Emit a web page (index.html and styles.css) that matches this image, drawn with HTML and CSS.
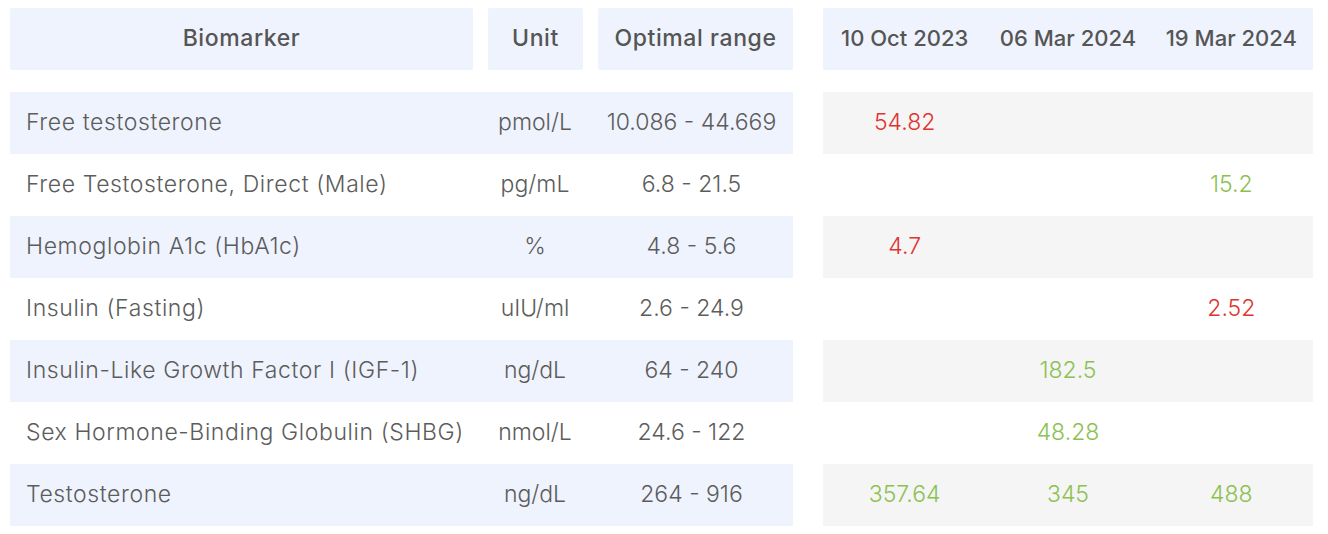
FILE: index.html
```html
<!DOCTYPE html>
<html>
<head>
<meta charset="utf-8">
<link rel="stylesheet" href="styles.css">
</head>
<body>
<div class="table">
  <div class="row head">
    <div class="left">
      <div class="hcell">Biomarker</div>
      <div class="hcell">Unit</div>
      <div class="hcell">Optimal range</div>
    </div>
    <div class="right hdates">
      <div class="dcell">10 Oct 2023</div>
      <div class="dcell">06 Mar 2024</div>
      <div class="dcell">19 Mar 2024</div>
    </div>
  </div>

  <div class="row body odd">
    <div class="left"><div class="name">Free testosterone</div><div class="c">pmol/L</div><div class="c">10.086 - 44.669</div></div>
    <div class="right"><div class="v red">54.82</div><div class="v"></div><div class="v"></div></div>
  </div>
  <div class="row body">
    <div class="left"><div class="name">Free Testosterone, Direct (Male)</div><div class="c">pg/mL</div><div class="c">6.8 - 21.5</div></div>
    <div class="right"><div class="v"></div><div class="v"></div><div class="v green">15.2</div></div>
  </div>
  <div class="row body odd">
    <div class="left"><div class="name">Hemoglobin A1c (HbA1c)</div><div class="c">%</div><div class="c">4.8 - 5.6</div></div>
    <div class="right"><div class="v red">4.7</div><div class="v"></div><div class="v"></div></div>
  </div>
  <div class="row body">
    <div class="left"><div class="name">Insulin (Fasting)</div><div class="c">uIU/ml</div><div class="c">2.6 - 24.9</div></div>
    <div class="right"><div class="v"></div><div class="v"></div><div class="v red">2.52</div></div>
  </div>
  <div class="row body odd">
    <div class="left"><div class="name">Insulin-Like Growth Factor I (IGF-1)</div><div class="c">ng/dL</div><div class="c">64 - 240</div></div>
    <div class="right"><div class="v"></div><div class="v green">182.5</div><div class="v"></div></div>
  </div>
  <div class="row body">
    <div class="left"><div class="name">Sex Hormone-Binding Globulin (SHBG)</div><div class="c">nmol/L</div><div class="c">24.6 - 122</div></div>
    <div class="right"><div class="v"></div><div class="v green">48.28</div><div class="v"></div></div>
  </div>
  <div class="row body odd">
    <div class="left"><div class="name">Testosterone</div><div class="c">ng/dL</div><div class="c">264 - 916</div></div>
    <div class="right"><div class="v green">357.64</div><div class="v green">345</div><div class="v green">488</div></div>
  </div>
</div>
</body>
</html>
```
FILE: styles.css
```css
html, body {
  margin: 0;
  padding: 0;
  background: #ffffff;
}
body {
  font-family: Inter, "Open Sans", sans-serif;
  color: #5a5a5a;
}
.table {
  padding: 8px 15px 0 10px;
  display: flex;
  flex-direction: column;
}
.row {
  display: flex;
  height: 62px;
}
.left {
  width: 783px;
  display: grid;
  grid-template-columns: 470px 110px 203px;
}
.right {
  margin-left: 30px;
  width: 490px;
  display: grid;
  grid-template-columns: 1fr 1fr 1fr;
}
.head {
  margin-bottom: 22px;
}
.head .left {
  grid-template-columns: 463px 95px 195px;
  column-gap: 15px;
}
.hcell, .hdates {
  background: #eff3fe;
  border-radius: 2px;
}
.hcell, .dcell {
  display: flex;
  align-items: center;
  justify-content: center;
  padding-bottom: 3px;
  font-size: 23px;
  font-weight: 500;
  letter-spacing: 0.6px;
  color: #555555;
}
.dcell {
  font-size: 22px;
  letter-spacing: 0;
}
.odd .left { background: #eff3fe; }
.odd .right { background: #f5f5f5; }
.name, .c, .v {
  display: flex;
  align-items: center;
  padding-bottom: 3px;
  font-size: 23px;
  font-weight: 300;
  color: #5c5c5c;
}
.name {
  padding-left: 16px;
  letter-spacing: 0.6px;
}
.c, .v {
  justify-content: center;
  letter-spacing: 0;
}
.red { color: #e0342f; }
.green { color: #8cc152; }
```
